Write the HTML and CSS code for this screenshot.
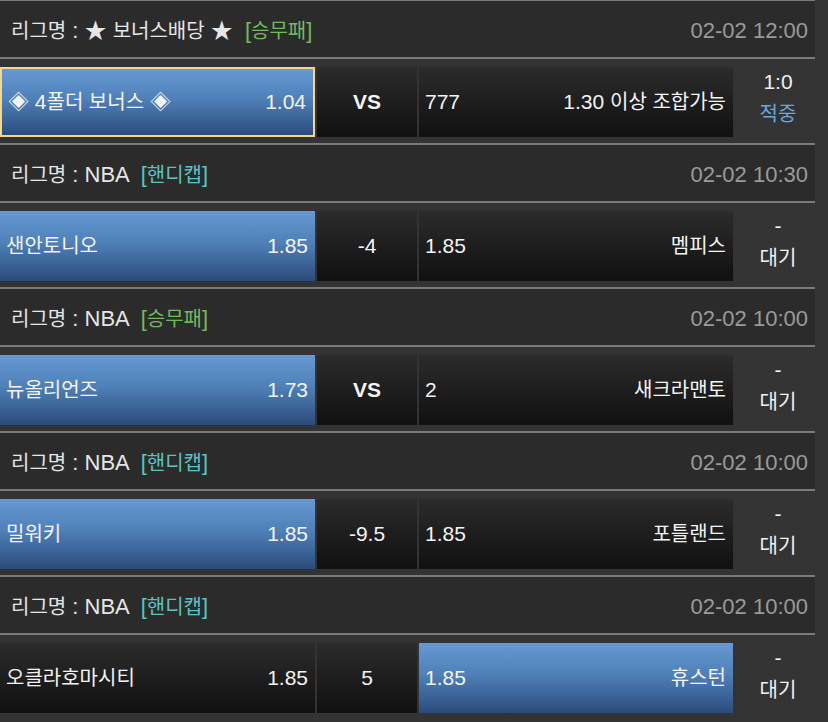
FILE: index.html
```html
<!DOCTYPE html>
<html lang="ko">
<head>
<meta charset="utf-8">
<title>리그</title>
<link rel="stylesheet" href="styles.css">
</head>
<body>
<div class="board">

  <section class="game">
    <div class="head">
      <div class="league"><span class="k">리그명</span> : ★ <span class="k">보너스배당</span> ★ <span class="tag green">[<span class="k">승무패</span>]</span></div>
      <div class="time">02-02 12:00</div>
    </div>
    <div class="row">
      <div class="cell team blue picked"><span>◈ 4<span class="k">폴더 보너스</span> ◈</span><span>1.04</span></div>
      <div class="cell mid bold">VS</div>
      <div class="cell team"><span>777</span><span>1.30 <span class="k">이상 조합가능</span></span></div>
      <div class="result"><div>1:0</div><div class="k win">적중</div></div>
    </div>
  </section>

  <section class="game">
    <div class="head">
      <div class="league"><span class="k">리그명</span> : NBA <span class="tag teal">[<span class="k">핸디캡</span>]</span></div>
      <div class="time">02-02 10:30</div>
    </div>
    <div class="row">
      <div class="cell team blue"><span class="k">샌안토니오</span><span>1.85</span></div>
      <div class="cell mid">-4</div>
      <div class="cell team"><span>1.85</span><span class="k">멤피스</span></div>
      <div class="result"><div>-</div><div class="k">대기</div></div>
    </div>
  </section>

  <section class="game">
    <div class="head">
      <div class="league"><span class="k">리그명</span> : NBA <span class="tag green">[<span class="k">승무패</span>]</span></div>
      <div class="time">02-02 10:00</div>
    </div>
    <div class="row">
      <div class="cell team blue"><span class="k">뉴올리언즈</span><span>1.73</span></div>
      <div class="cell mid bold">VS</div>
      <div class="cell team"><span>2</span><span class="k">새크라맨토</span></div>
      <div class="result"><div>-</div><div class="k">대기</div></div>
    </div>
  </section>

  <section class="game">
    <div class="head">
      <div class="league"><span class="k">리그명</span> : NBA <span class="tag teal">[<span class="k">핸디캡</span>]</span></div>
      <div class="time">02-02 10:00</div>
    </div>
    <div class="row">
      <div class="cell team blue"><span class="k">밀워키</span><span>1.85</span></div>
      <div class="cell mid">-9.5</div>
      <div class="cell team"><span>1.85</span><span class="k">포틀랜드</span></div>
      <div class="result"><div>-</div><div class="k">대기</div></div>
    </div>
  </section>

  <section class="game">
    <div class="head">
      <div class="league"><span class="k">리그명</span> : NBA <span class="tag teal">[<span class="k">핸디캡</span>]</span></div>
      <div class="time">02-02 10:00</div>
    </div>
    <div class="row">
      <div class="cell team"><span class="k">오클라호마시티</span><span>1.85</span></div>
      <div class="cell mid">5</div>
      <div class="cell team blue"><span>1.85</span><span class="k">휴스턴</span></div>
      <div class="result"><div>-</div><div class="k">대기</div></div>
    </div>
  </section>

</div>
</body>
</html>
```

FILE: styles.css
```css
html, body {
  margin: 0;
  padding: 0;
  background: #333333;
  overflow: hidden;
}

body {
  font-family: "Liberation Sans", "Noto Sans CJK KR", sans-serif;
  font-size: 21px;
  color: #f0f0f0;
}

.board {
  width: 815px;
  margin-top: -1px;
}

.k {
  font-size: 20px;
}

.head {
  background: #2b2b2b;
  border-top: 2px solid #7a7a7a;
  border-bottom: 2px solid #7a7a7a;
  display: flex;
  justify-content: space-between;
  align-items: center;
  padding: 4px 7px 0 11px;
  box-sizing: border-box;
  height: 60px;
  line-height: 24px;
  font-size: 22px;
}

.league {
  color: #e6e6e6;
  white-space: nowrap;
}

.tag {
  margin-left: 6px;
}

.green { color: #74b85c; }
.teal { color: #5cc3c3; }

.time {
  color: #9a9a9a;
}

.row {
  display: grid;
  grid-template-columns: 315px 100px 314px 1fr;
  column-gap: 2px;
  padding: 8px 0 6px 0;
  height: 84px;
  box-sizing: border-box;
}

.cell {
  height: 70px;
  box-sizing: border-box;
  background: linear-gradient(to bottom, #2c2c2c 0%, #1c1c1c 55%, #101010 100%);
  display: flex;
  align-items: center;
  line-height: 24px;
  white-space: nowrap;
  color: #f4f4f4;
}

.team {
  justify-content: space-between;
  padding: 0 7px 0 6px;
}

.blue {
  background: linear-gradient(to bottom, #6699d3 0%, #4f80b8 45%, #2b4c7b 100%);
}

.picked {
  border: 2px solid #f3d88c;
  padding: 0 7px 0 6px;
}

.mid {
  justify-content: center;
}

.bold {
  font-weight: bold;
}

.result {
  display: flex;
  flex-direction: column;
  justify-content: center;
  align-items: center;
  padding-left: 6px;
  line-height: 32px;
  color: #f0f0f0;
  margin-top: -8px;
}

.win {
  color: #6aa6df;
}
```
